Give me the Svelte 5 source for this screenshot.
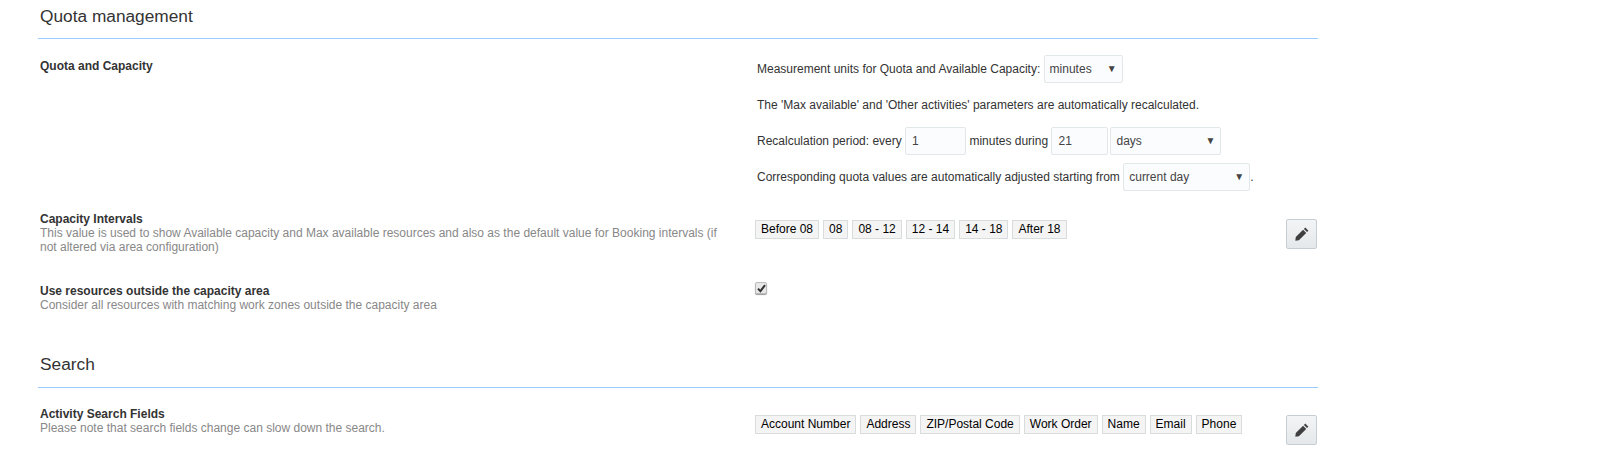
<script>
  const intervals = ['Before 08', '08', '08 - 12', '12 - 14', '14 - 18', 'After 18'];
  const fields = ['Account Number', 'Address', 'ZIP/Postal Code', 'Work Order', 'Name', 'Email', 'Phone'];
</script>

{#snippet pencil()}
  <svg width="14" height="14" viewBox="0 0 14 14" aria-hidden="true"><path d="M10.3 0.6 13.4 3.7 12 5.1 8.9 2ZM8.1 2.8 11.2 5.9 3.9 13.2 0.3 13.7 0.8 10.1Z" fill="#3f3f3f"/></svg>
{/snippet}

{#snippet drop(value, cls)}
  <span class="drop {cls}">
    <select><option>{value}</option></select>
    <span class="arrow">▼</span>
  </span>
{/snippet}

<main class="page">
  <h2 class="head">Quota management</h2>

  <section class="row first">
    <div class="label"><strong>Quota and Capacity</strong></div>
    <div class="value stack">
      <div class="line">Measurement units for Quota and Available Capacity: {@render drop('minutes', 'w-min')}</div>
      <div class="line plain">The 'Max available' and 'Other activities' parameters are automatically recalculated.</div>
      <div class="line">Recalculation period: every <input class="num a" value="1" /> minutes during <input class="num b" value="21" /> {@render drop('days', 'w-days')}</div>
      <div class="line">Corresponding quota values are automatically adjusted starting from {@render drop('current day', 'w-cur')}.</div>
    </div>
  </section>

  <section class="row intervals">
    <div class="label">
      <strong>Capacity Intervals</strong>
      <p>This value is used to show Available capacity and Max available resources and also as the default value for Booking intervals (if not altered via area configuration)</p>
    </div>
    <div class="value tags">
      {#each intervals as t}<span class="tag">{t}</span>{/each}
    </div>
    <button class="edit" aria-label="Edit">{@render pencil()}</button>
  </section>

  <section class="row outside">
    <div class="label">
      <strong>Use resources outside the capacity area</strong>
      <p>Consider all resources with matching work zones outside the capacity area</p>
    </div>
    <div class="value">
      <span class="check">
        <svg width="9" height="9" viewBox="0 0 9 9" aria-hidden="true"><path d="M1 4.6 3.4 7.2 8 1.2" fill="none" stroke="#333" stroke-width="2"/></svg>
      </span>
    </div>
  </section>

  <h2 class="head search">Search</h2>

  <section class="row fields">
    <div class="label">
      <strong>Activity Search Fields</strong>
      <p>Please note that search fields change can slow down the search.</p>
    </div>
    <div class="value tags">
      {#each fields as t}<span class="tag">{t}</span>{/each}
    </div>
    <button class="edit" aria-label="Edit">{@render pencil()}</button>
  </section>
</main>

<style>
  :global(body) {
    margin: 0;
    background: #fff;
  }
  .page {
    width: 1280px;
    margin-left: 38px;
    font: 12px/14px "Liberation Sans", Arial, sans-serif;
    color: #333;
  }
  .head {
    margin: 0;
    padding: 6px 0 12px 2px;
    height: 20px;
    font-size: 17.3px;
    font-weight: 400;
    line-height: 20px;
    border-bottom: 1px solid #99ccff;
  }
  .head.search {
    margin-top: 37px;
    padding: 5px 0 13px 2px;
  }
  .row {
    display: flex;
    align-items: flex-start;
  }
  .label {
    width: 719px;
    padding-left: 2px;
    box-sizing: border-box;
    flex: none;
  }
  .label strong {
    display: block;
    font-weight: 700;
    color: #333;
  }
  .label p {
    margin: 0;
    max-width: 690px;
    color: #888;
  }
  .value {
    flex: 1;
    min-width: 0;
  }
  .first {
    margin-top: 20px;
  }
  .stack {
    margin-top: -4px;
    display: flex;
    flex-direction: column;
  }
  .line {
    display: flex;
    align-items: center;
    height: 28px;
    margin-bottom: 8px;
    white-space: pre;
  }
  .drop {
    position: relative;
    display: inline-flex;
  }
  select, .num {
    box-sizing: border-box;
    height: 28px;
    padding: 0 5px;
    border: 1px solid #e2e7ea;
    border-radius: 2px;
    background: #fbfcfd;
    color: #444;
    font: inherit;
    appearance: none;
    outline: none;
  }
  .num { padding: 0 6px; }
  .drop select { width: 100%; }
  .w-min { width: 79px; }
  .w-days { width: 111px; }
  .w-cur { width: 127px; }
  .num.a { width: 61px; }
  .num.b { width: 57px; margin-right: 2px; }
  .arrow {
    position: absolute;
    right: 6px;
    top: 7px;
    font-size: 10px;
    color: #444;
    pointer-events: none;
  }
  .intervals {
    margin-top: 13px;
  }
  .tags {
    display: flex;
    gap: 4px;
    margin: 8px 0 0 -2px;
  }
  .tag {
    box-sizing: border-box;
    height: 19px;
    padding: 0 5px;
    line-height: 17px;
    background: #f4f4f4;
    border: 1px solid #d9dcdc;
    color: #000;
  }
  .edit {
    box-sizing: border-box;
    display: flex;
    align-items: center;
    justify-content: center;
    width: 31px;
    height: 30px;
    margin: 7px 1px 0 0;
    padding: 0;
    border: 1px solid #c6cdd3;
    border-radius: 2px;
    background: linear-gradient(#f3f4f5, #e5e8ea);
  }
  .outside {
    margin-top: 30px;
  }
  .check {
    display: flex;
    align-items: center;
    justify-content: center;
    box-sizing: border-box;
    width: 12px;
    height: 12px;
    margin: -2px 0 0 -2px;
    border: 1px solid #bbb;
    border-radius: 2px;
    background: #e8e8e8;
    box-shadow: 0 1px 1px #999;
  }
  .fields {
    margin-top: 19px;
  }
  .fields .tags { margin-top: 8px; }
  .fields .edit { margin-top: 8px; }
</style>
